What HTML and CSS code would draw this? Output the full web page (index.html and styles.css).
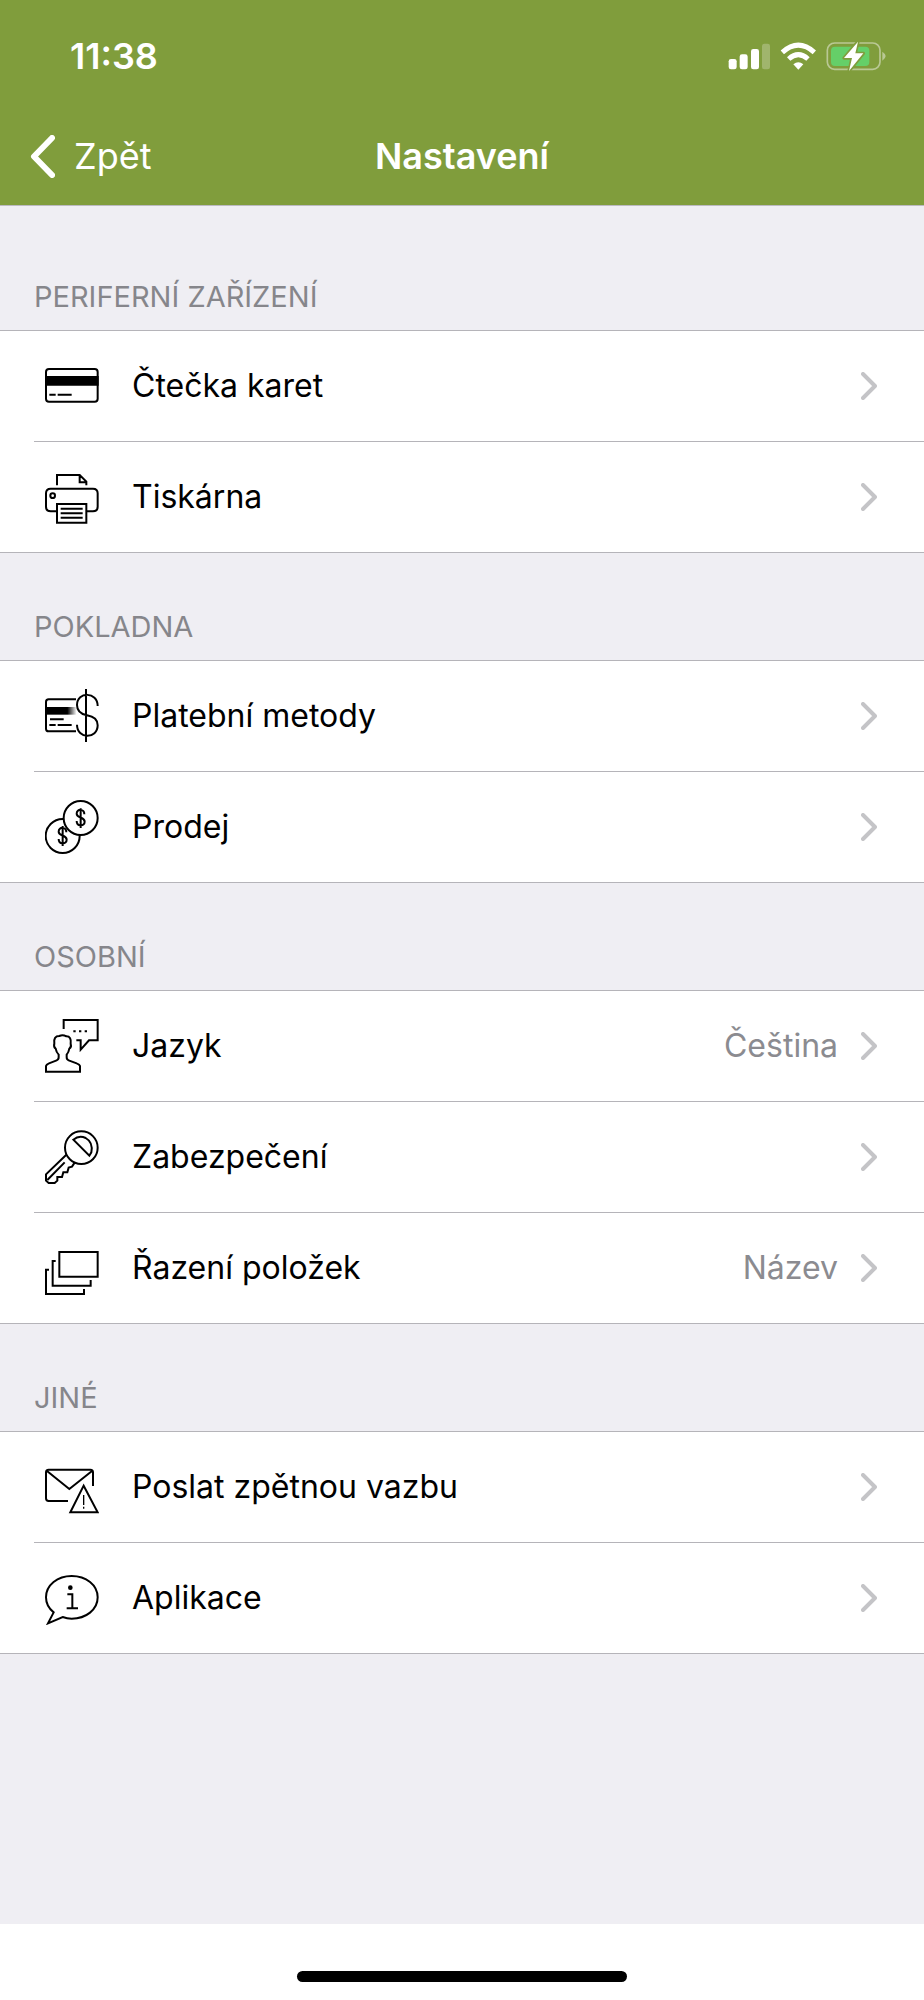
FILE: index.html
```html
<!DOCTYPE html>
<html lang="cs">
<head>
    <meta charset="UTF-8">
    <meta name="viewport" content="width=device-width, initial-scale=1.0">
    <title>Nastavení</title>
    <link rel="stylesheet" href="styles.css">
</head>
<body>
    <header class="header">
        <div class="status-bar">
            <span class="status-time">11:38</span>
            <svg class="status-icons" viewBox="78 54 480 102" aria-hidden="true">
                <!-- signal -->
                <g fill="#fff">
                    <rect x="86" y="114" width="24" height="31" rx="7"/>
                    <rect x="119" y="100" width="24" height="45" rx="7"/>
                    <rect x="153" y="84" width="24" height="61" rx="7"/>
                    <rect x="186" y="68" width="24" height="77" rx="7" opacity=".25"/>
                </g>
                <!-- wifi -->
                <g fill="none" stroke="#fff" stroke-width="15">
                    <path d="M247 94 Q295 51 343 94"/>
                    <path d="M266 114 Q295 88 324 114"/>
                </g>
                <path d="M280 130 Q295 118 310 130 L295 146 Z" fill="#fff"/>
                <!-- battery -->
                <rect x="382" y="66" width="158" height="79" rx="22" fill="none" stroke="#b9c894" stroke-width="5"/>
                <path d="M547 92 Q567 105 547 119 Z" fill="#b9c894"/>
                <rect x="393" y="77" width="115" height="58" rx="12" fill="#65cf68"/>
                <path d="M474 62 L432 111 H456 L447 150 L490 97 H466 Z" fill="#fff" stroke="#809d3c" stroke-width="10" stroke-linejoin="round" paint-order="stroke"/>
            </svg>
        </div>
        <nav class="nav-bar">
            <button type="button" class="back-button">
                <svg class="back-icon" viewBox="0 0 25 43" aria-hidden="true"><path d="M22 3 L4 21.500 L22 40"/></svg>
                Zpět
            </button>
            <h1 class="nav-title">Nastavení</h1>
        </nav>
    </header>

    <main class="settings">
        <section>
            <h2 class="section-title">PERIFERNÍ ZAŘÍZENÍ</h2>
            <ul class="group">
                <li><a class="row" href="#karty">
                    <svg class="icon" viewBox="45 27 162 162" aria-hidden="true">
                        <rect x="48" y="57" width="155" height="98" rx="9"/>
                        <path class="solid" d="M48 81 H203 V104 H48 Z"/>
                        <path d="M58 134 H77 M83 134 H125"/>
                    </svg>
                    <span class="label">Čtečka karet</span>
                    <svg class="chevron" viewBox="0 0 16 28" aria-hidden="true"><path d="M2 2 L14 14 L2 26"/></svg>
                </a></li>
                <li><a class="row" href="#tiskarna">
                    <svg class="icon" viewBox="45 360 162 162" aria-hidden="true">
                        <path d="M81 406 V375 H149 L169 395 V406 M149 375 V397 H169"/>
                        <path d="M80 484 H62 Q48 484 48 470 V430 Q48 416 62 416 H189 Q203 416 203 430 V470 Q203 484 189 484 H170"/>
                        <circle cx="68" cy="437" r="7"/>
                        <path d="M81 462 H169 V518 H81 Z M92 476 H158 M92 490 H158 M92 503 H158"/>
                    </svg>
                    <span class="label">Tiskárna</span>
                    <svg class="chevron" viewBox="0 0 16 28" aria-hidden="true"><path d="M2 2 L14 14 L2 26"/></svg>
                </a></li>
            </ul>
        </section>

        <section>
            <h2 class="section-title">POKLADNA</h2>
            <ul class="group">
                <li><a class="row" href="#platby">
                    <svg class="icon" viewBox="45 27 162 162" aria-hidden="true">
                        <defs>
                            <linearGradient id="fade" gradientUnits="userSpaceOnUse" x1="112" y1="0" x2="140" y2="0">
                                <stop offset="0" stop-color="#000"/>
                                <stop offset="1" stop-color="#000" stop-opacity="0"/>
                            </linearGradient>
                        </defs>
                        <path d="M138 58 H56 Q48 58 48 66 V146 Q48 154 56 154 H138"/>
                        <path d="M48 81 H140 V104 H48 Z" fill="url(#fade)" stroke="none"/>
                        <path d="M60 118 H101 M58 135 H77 M83 135 H125"/>
                        <path d="M203 78 C203 34 141 34 141 75 C141 96 155 103 171 106 C189 109 203 117 203 136 C203 178 141 178 141 134 M168 27 V186"/>
                    </svg>
                    <span class="label">Platební metody</span>
                    <svg class="chevron" viewBox="0 0 16 28" aria-hidden="true"><path d="M2 2 L14 14 L2 26"/></svg>
                </a></li>
                <li><a class="row" href="#prodej">
                    <svg class="icon" viewBox="45 360 162 162" aria-hidden="true">
                        <circle cx="98" cy="468" r="51"/>
                        <path d="M109 457 C109 439 86 440 86 455 C86 469 110 464 110 479 C110 495 86 494 86 477 M98 438 V498"/>
                        <circle cx="152" cy="414" r="51" fill="#fff"/>
                        <path d="M163 403 C163 385 140 386 140 401 C140 415 164 410 164 425 C164 441 140 440 140 423 M152 385 V444"/>
                    </svg>
                    <span class="label">Prodej</span>
                    <svg class="chevron" viewBox="0 0 16 28" aria-hidden="true"><path d="M2 2 L14 14 L2 26"/></svg>
                </a></li>
            </ul>
        </section>

        <section>
            <h2 class="section-title">OSOBNÍ</h2>
            <ul class="group">
                <li><a class="row" href="#jazyk">
                    <svg class="icon" viewBox="45 27 162 162" aria-hidden="true">
                        <path d="M101 57 V30 H203 V91 H177 L152 119 V91 H139"/>
                        <path d="M130 64 H137 M147 64 H154 M164 64 H171"/>
                        <path d="M48 185 V168 Q49 163 57 160 L80 151 Q86 149 86 142 V134 Q79 127 77 116 Q70 112 73 100 Q70 78 88 78 Q98 73 109 79 Q125 79 122 101 Q125 112 118 116 Q116 127 110 134 V142 Q110 149 116 151 L140 160 Q149 163 150 168 V185 Z"/>
                    </svg>
                    <span class="label">Jazyk</span>
                    <span class="value">Čeština</span>
                    <svg class="chevron" viewBox="0 0 16 28" aria-hidden="true"><path d="M2 2 L14 14 L2 26"/></svg>
                </a></li>
                <li><a class="row" href="#zabezpeceni">
                    <svg class="icon" viewBox="45 360 162 162" aria-hidden="true">
                        <circle cx="154" cy="413" r="49"/>
                        <path d="M130 389 Q147 375 167 384 Q190 397 184 427 L178 437 Z"/>
                        <path d="M109 434 L48 493 V512 L56 519 H74 L82 512 V501 H96 L100 487 H112 L116 473 L126 470 L134 458 M52 510 L104 457"/>
                    </svg>
                    <span class="label">Zabezpečení</span>
                    <svg class="chevron" viewBox="0 0 16 28" aria-hidden="true"><path d="M2 2 L14 14 L2 26"/></svg>
                </a></li>
                <li><a class="row" href="#razeni">
                    <svg class="icon" viewBox="45 33 162 162" aria-hidden="true">
                        <path d="M88 66 H203 V140 H88 Z M77 93 H68 V167 H182 V150 M57 119 H48 V192 H162 V177"/>
                    </svg>
                    <span class="label">Řazení položek</span>
                    <span class="value">Název</span>
                    <svg class="chevron" viewBox="0 0 16 28" aria-hidden="true"><path d="M2 2 L14 14 L2 26"/></svg>
                </a></li>
            </ul>
        </section>

        <section>
            <h2 class="section-title">JINÉ</h2>
            <ul class="group">
                <li><a class="row" href="#zpetna-vazba">
                    <svg class="icon" viewBox="45 33 162 162" aria-hidden="true">
                        <path d="M114 156 H56 Q48 156 48 148 V70 Q48 62 56 62 H181 Q189 62 189 70 V111 M50 65 L118 120 L187 65"/>
                        <path d="M161 110 L203 190 H121 Z"/>
                        <path class="thin" d="M161 138 V168 M161 173 V179"/>
                    </svg>
                    <span class="label">Poslat zpětnou vazbu</span>
                    <svg class="chevron" viewBox="0 0 16 28" aria-hidden="true"><path d="M2 2 L14 14 L2 26"/></svg>
                </a></li>
                <li><a class="row" href="#aplikace">
                    <svg class="icon" viewBox="45 366 162 162" aria-hidden="true">
                        <path d="M71 490 C58 480 48 463 48 445 C48 408 83 381 125 381 C168 381 203 408 203 445 C203 482 168 509 125 509 C115 509 106 507 98 504 L54 523 Z"/>
                        <circle class="solid" cx="121" cy="416" r="4"/>
                        <path d="M112 436 H127 V477 M110 478 H144"/>
                    </svg>
                    <span class="label">Aplikace</span>
                    <svg class="chevron" viewBox="0 0 16 28" aria-hidden="true"><path d="M2 2 L14 14 L2 26"/></svg>
                </a></li>
            </ul>
        </section>
    </main>

    <footer class="home-area">
        <div class="home-indicator"></div>
    </footer>
</body>
</html>
```

FILE: styles.css
```css
* {
    box-sizing: border-box;
}

body {
    margin: 0;
    min-height: 100vh;
    display: flex;
    flex-direction: column;
    background-color: #efeef3;
    color: #000;
    font-family: Inter, "Noto Sans", sans-serif;
    font-size: 32px;
    line-height: 40px;
}

/* header */
.header {
    background-color: #809d3c;
    border-bottom: 1px solid #bbbac0;
    color: #fff;
}

.status-bar {
    display: flex;
    align-items: center;
    justify-content: space-between;
    height: 111px;
    padding: 0 38px 0 70px;
}

.status-time {
    font-size: 36px;
    font-weight: 600;
}

.status-icons {
    width: 160px;
    height: 34px;
}

.nav-bar {
    display: grid;
    grid-template-columns: 1fr auto 1fr;
    align-items: center;
    height: 94px;
    padding: 0 30px 4px;
}

.back-button {
    display: flex;
    align-items: center;
    justify-self: start;
    gap: 19px;
    padding: 0;
    border: none;
    background: none;
    color: inherit;
    font: inherit;
    font-size: 36px;
    cursor: pointer;
}

.back-icon {
    width: 25px;
    height: 43px;
    fill: none;
    stroke: #fff;
    stroke-width: 6;
    stroke-linecap: round;
    stroke-linejoin: round;
}

.nav-title {
    margin: 0;
    font-size: 36px;
    font-weight: 600;
}

/* settings list */
.settings {
    flex: 1;
    padding-top: 17px;
}

.section-title {
    margin: 0;
    padding: 54px 34px 13px;
    color: #86868b;
    font-size: 29px;
    font-weight: 400;
}

.group {
    margin: 0;
    padding: 0 0 0 34px;
    list-style: none;
    background-color: #fff;
    border-top: 1px solid #b5b4b9;
    border-bottom: 1px solid #b5b4b9;
}

.group li + li {
    border-top: 1px solid #b5b4b9;
}

.row {
    display: flex;
    align-items: center;
    height: 110px;
    padding: 0 47px 0 11px;
    color: inherit;
    text-decoration: none;
}

.icon {
    width: 54px;
    height: 54px;
    margin-right: 33px;
    fill: none;
    stroke: #000;
    stroke-width: 6;
}

.icon .solid {
    fill: #000;
}

.icon .thin {
    stroke-width: 4;
}

.label {
    flex: 1;
}

.value {
    color: #8b8b90;
}

.chevron {
    width: 16px;
    height: 28px;
    margin-left: 23px;
    fill: none;
    stroke: #c4c4c7;
    stroke-width: 4;
    stroke-linecap: round;
    stroke-linejoin: round;
}

/* home indicator */
.home-area {
    display: flex;
    align-items: flex-end;
    justify-content: center;
    height: 76px;
    padding-bottom: 18px;
    background-color: #fff;
}

.home-indicator {
    width: 330px;
    height: 11px;
    border-radius: 6px;
    background-color: #000;
}
```
